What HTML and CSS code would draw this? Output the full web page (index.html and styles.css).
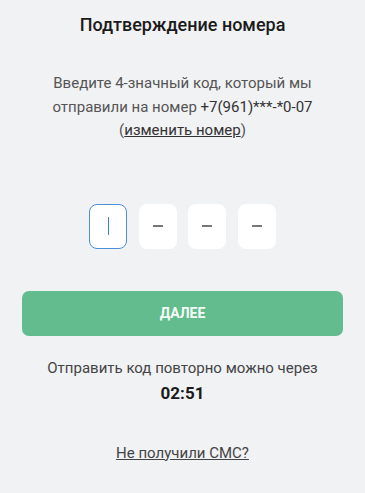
FILE: index.html
```html
<!DOCTYPE html>
<html lang="ru">
<head>
<meta charset="utf-8">
<link rel="stylesheet" href="styles.css">
</head>
<body>
<div class="page">
  <h1 class="title">Подтверждение номера</h1>
  <p class="desc">Введите 4-значный код, который мы отправили на номер <span class="phone">+7(961)***-*0-07</span> (<a class="link" href="#">изменить номер</a>)</p>
  <div class="code">
    <div class="cell active"><span class="caret"></span></div>
    <div class="cell"><span class="dash"></span></div>
    <div class="cell"><span class="dash"></span></div>
    <div class="cell"><span class="dash"></span></div>
  </div>
  <button class="btn">ДАЛЕЕ</button>
  <p class="resend">Отправить код повторно можно через</p>
  <div class="timer">02:51</div>
  <a class="link nosms" href="#">Не получили СМС?</a>
</div>
</body>
</html>
```
FILE: styles.css
```css
html, body {
  margin: 0;
  padding: 0;
  background: #f1f2f4;
}
body {
  font-family: Roboto, "Noto Sans", sans-serif;
  color: #222;
}
.page {
  display: flex;
  flex-direction: column;
  align-items: center;
  padding: 13px 22px 0;
  height: 493px;
  box-sizing: border-box;
}
.title {
  margin: 0;
  font-size: 18px;
  font-weight: 500;
  line-height: 24px;
  color: #1b1b1b;
}
.desc {
  margin: 35px 0 0;
  width: 280px;
  text-align: center;
  font-size: 15px;
  line-height: 23.5px;
  color: #555;
}
.phone {
  color: #333;
}
.link {
  color: #333;
  text-decoration: underline;
}
.code {
  display: flex;
  gap: 11.5px;
  margin-top: 61px;
}
.cell {
  width: 38px;
  height: 45px;
  box-sizing: border-box;
  background: #fff;
  border-radius: 8px;
  display: flex;
  align-items: center;
  justify-content: center;
}
.cell.active {
  border: 1px solid #4a8fd8;
}
.caret {
  width: 1.5px;
  height: 18px;
  background: #3a7fd0;
}
.dash {
  width: 10px;
  height: 1.5px;
  background: #777;
}
.btn {
  margin-top: 42px;
  width: 321px;
  height: 45px;
  border: 0;
  border-radius: 7px;
  background: #63bc8e;
  color: #f4fbf7;
  font-family: Roboto, "Noto Sans", sans-serif;
  font-size: 14px;
  font-weight: 700;
}
.resend {
  margin: 21px 0 0;
  font-size: 15px;
  line-height: 22px;
  color: #444;
}
.timer {
  margin-top: 3px;
  font-size: 17px;
  font-weight: 700;
  line-height: 22px;
  color: #1b1b1b;
}
.nosms {
  margin-top: 38px;
  font-size: 15px;
  line-height: 22px;
  color: #444;
}
```
